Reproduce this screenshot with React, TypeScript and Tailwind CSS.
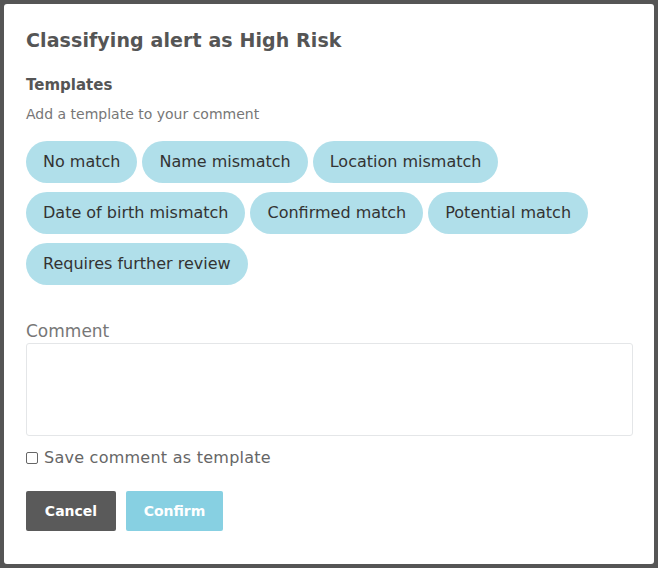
import React from 'react';

const templates = [
  'No match',
  'Name mismatch',
  'Location mismatch',
  'Date of birth mismatch',
  'Confirmed match',
  'Potential match',
  'Requires further review',
];

const App: React.FC = () => {
  return (
    <div
      className="w-[658px] h-[568px] bg-[#555555] p-1"
      style={{ fontFamily: '"DejaVu Sans", "Open Sans", sans-serif' }}
    >
      <div className="h-full bg-white rounded-[3px] pl-[22px] pr-[21px] pt-[21px]">
        <h2 className="text-[19px] leading-[30px] font-semibold tracking-[0.1px] text-[#555555]">
          Classifying alert as High Risk
        </h2>

        {/* Templates */}
        <div className="mt-[19px] text-[15px] leading-[22px] font-semibold text-[#555555]">Templates</div>
        <div className="mt-[8px] text-[14px] leading-[20px] text-[#777777]">Add a template to your comment</div>
        <div className="mt-[17px] flex flex-wrap gap-x-[5px] gap-y-[9px] w-[600px]">
          {templates.map((t) => (
            <button
              key={t}
              className="h-[42px] px-[17px] rounded-full bg-[#b0dfea] text-[16px] text-[#333333]"
            >
              {t}
            </button>
          ))}
        </div>

        {/* Comment */}
        <div className="mt-[35px] text-[17px] leading-[22px] text-[#777777]">Comment</div>
        <textarea className="mt-[1px] block w-[607px] h-[93px] border border-[#e4e6e8] rounded-[3px] resize-none outline-none" />

        <label className="mt-[11px] flex items-center gap-[6px] text-[16px] leading-[22px] tracking-[0.25px] text-[#666666]">
          <span className="w-[12px] h-[12px] border border-[#666666] rounded-[2px]" />
          Save comment as template
        </label>

        <div className="mt-[22px] flex gap-[10px]">
          <button className="w-[90px] h-[40px] bg-[#5a5a5a] rounded-[2px] text-white text-[14px] font-bold">
            Cancel
          </button>
          <button className="w-[97px] h-[40px] bg-[#87d0e2] rounded-[2px] text-white text-[14px] font-bold">
            Confirm
          </button>
        </div>
      </div>
    </div>
  );
};

export default App;
